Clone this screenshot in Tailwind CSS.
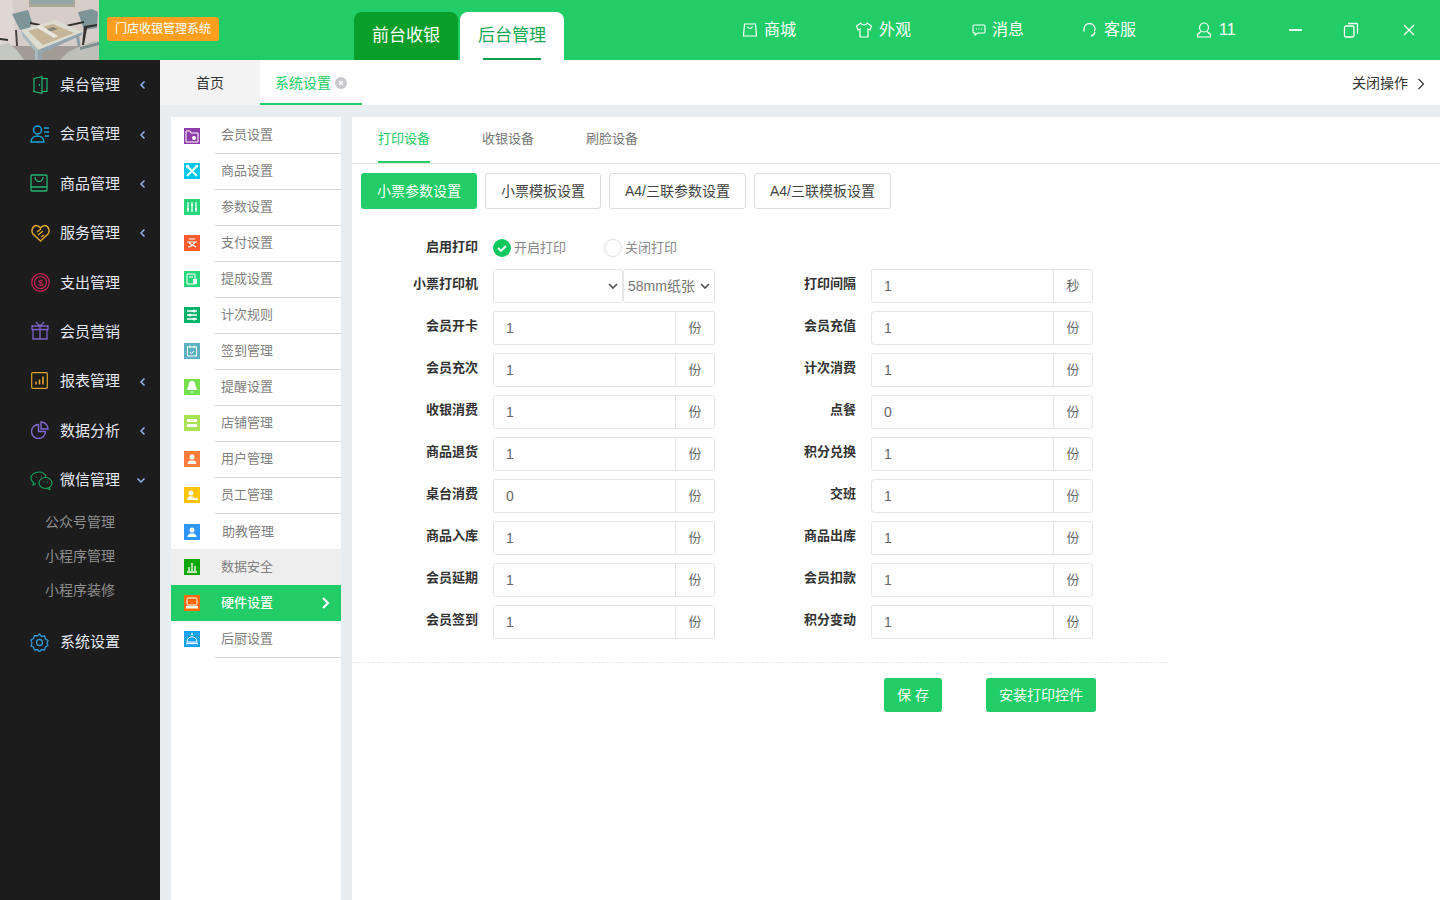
<!DOCTYPE html>
<html lang="zh-CN">
<head>
<meta charset="UTF-8">
<title>门店收银管理系统</title>
<script src="https://cdn.jsdelivr.net/npm/@tailwindcss/browser@4"></script>
</head>
<body class="h-[900px] w-[1440px] overflow-hidden bg-[#e9edf0] text-[14px] font-['Liberation_Sans','Noto_Sans_CJK_SC',sans-serif]">

<!-- top bar -->
<header class="flex h-[60px] items-stretch bg-[#22cc66] text-white">
  <svg class="h-[60px] w-[99px] shrink-0" viewBox="0 0 99 60">
    <defs><filter id="soft"><feGaussianBlur stdDeviation="0.6"/></filter></defs>
    <rect width="99" height="60" fill="#d6ccc8"/>
    <g filter="url(#soft)">
      <path d="M0 0h12l5 45H0z" fill="#e0d7d4"/>
      <rect x="29" y="0" width="46" height="7" fill="#a8a79a"/>
      <rect x="31" y="0" width="42" height="4" fill="#93a7ab"/>
      <path d="M0 46h99v14H0z" fill="#a39c96"/>
      <path d="M12 14l16-4 4 12-2 6-10 2-4-8z" fill="#7d9499"/>
      <path d="M78 12l14-3 6 3-1 16-13 2z" fill="#7d9499"/>
      <path d="M84 26l13-2v2l-10 2-3 17h-2z" fill="#33302e"/>
      <path d="M66 25l18-4v2l-18 4zM30 22l10 2v2l-10-2z" fill="#33302e"/>
      <path d="M15 30h2l1 16h-2z" fill="#4a4542"/>
      <path d="M38 50l44-18v3L42 53v7h-5v-8z" fill="#93a6af"/>
      <path d="M76 36h3l2 13h-3z" fill="#8a9ca5"/>
      <path d="M21 30 56 20l26 12-44 18z" fill="#dcdbd0"/>
      <path d="M28 31 53 24l21 9-31 12z" fill="#c6b596"/>
      <path d="M44 30l9-3 5 2-9 3z" fill="#8d8478"/>
      <path d="M36 27l18 11 4-2-18-11z" fill="#e8e6de"/>
      <path d="M21 30l17 20v10h-3V51L23 37z" fill="#a9bac0"/>
      <path d="M0 45l8-2 8 6 8 11H0z" fill="#c5c7c3"/>
      <path d="M0 38l8 1v2l-8-1z" fill="#33302e"/>
      <path d="M60 60l8-8 22-10 9-1v19z" fill="#bdbfb8"/>
      <path d="M80 47l19-5v3l-19 5z" fill="#7f8e8e"/>
    </g>
  </svg>
  <div class="ml-2 mt-[17px] flex h-6 w-[112px] shrink-0 items-center justify-center rounded-[3px] bg-[#ff9f1f] text-[12px]">门店收银管理系统</div>
  <div class="ml-[135px] mt-3 flex shrink-0 gap-0.5 text-[17px]">
    <div class="flex h-12 w-[104px] items-center justify-center rounded-t-lg bg-[#0a9e2a]">前台收银</div>
    <div class="relative flex h-12 w-[104px] items-center justify-center rounded-t-lg bg-white text-[#13a856]">后台管理<span class="absolute bottom-0 left-[23px] h-0.5 w-[58px] bg-[#12a150]"></span></div>
  </div>
  <nav class="ml-[178px] flex items-center text-[16px]">
    <div class="flex w-[113px] items-center gap-1.5">
      <svg class="h-4 w-4" viewBox="0 0 16 16" fill="none" stroke="currentColor" stroke-width="1.2"><path d="M2.500 2h11l1 12h-13z"/><path d="M5.500 4.500c.5 2.500 4.500 2.500 5 0"/></svg>商城
    </div>
    <div class="flex w-[117px] items-center gap-1.5">
      <svg class="h-[18px] w-[18px]" viewBox="0 0 18 18" fill="none" stroke="currentColor" stroke-width="1.2"><path d="M6 2 1.500 5l1.500 4 2-1v8h8V8l2 1 1.500-4L12 2c-.5 2.500-5.500 2.500-6 0z"/></svg>外观
    </div>
    <div class="flex w-[110px] items-center gap-1.5">
      <svg class="h-[14px] w-[14px]" viewBox="0 0 14 14" fill="none" stroke="currentColor" stroke-width="1.1"><path d="M2 2h10a1 1 0 0 1 1 1v6a1 1 0 0 1-1 1H6l-3 2v-2H2a1 1 0 0 1-1-1V3a1 1 0 0 1 1-1z"/><path d="M4 6h1M6.500 6h1M9 6h1"/></svg>消息
    </div>
    <div class="flex w-[114px] items-center gap-1.5">
      <svg class="h-4 w-4" viewBox="0 0 16 16" fill="none" stroke="currentColor" stroke-width="1.3"><path d="M2 9.500V7a5.500 5.500 0 0 1 11 0c0 1-.5 2-1 2"/><path d="M13 10c-.5 2-2 3.500-4 4"/></svg>客服
    </div>
    <div class="flex w-[71px] items-center gap-[7px]">
      <svg class="h-4 w-4" viewBox="0 0 16 16" fill="none" stroke="currentColor" stroke-width="1.2"><circle cx="8" cy="5.500" r="4.500"/><path d="M5 9.500 1.500 12.500V15h13v-2.500L11 9.500"/></svg>11
    </div>
    <div class="flex w-14 justify-center"><span class="h-0.5 w-[13px] bg-white/90"></span></div>
    <div class="flex w-14 justify-center">
      <svg class="h-4 w-4" viewBox="0 0 16 16" fill="none" stroke="currentColor" stroke-width="1.3"><rect x="1.500" y="4" width="9.500" height="11" rx="1.500"/><path d="M5 1.500h8.500a1 1 0 0 1 1 1V12"/></svg>
    </div>
    <div class="flex w-[60px] justify-center">
      <svg class="h-3 w-3" viewBox="0 0 12 12" stroke="currentColor" stroke-width="1.3"><path d="M1 1l10 10M11 1 1 11"/></svg>
    </div>
  </nav>
</header>

<div class="flex h-[840px]">
  <!-- dark sidebar -->
  <aside class="flex w-40 shrink-0 flex-col bg-[#1c1c1c] pt-[0.5px] text-[15px] text-[#e6e9f2]">
    <div class="relative flex h-[49.4px] items-center pl-[60px]">
      <svg class="absolute left-[33px] top-[15px] h-[18px] w-[15px]" viewBox="0 0 15 18" fill="none" stroke="#22b573" stroke-width="1.2"><path d="M1 2.500 9 .7v16.600l-8-1.800z"/><path d="M9 2.500h5v13H9"/><path d="M6.500 8v2"/></svg>
      桌台管理<span class="absolute right-3 text-[#8fb4ef]"><svg class="h-2.5 w-2.5" viewBox="0 0 10 10" fill="none" stroke="currentColor" stroke-width="1.5"><path d="M6.500 1.500 3 5l3.500 3.500"/></svg></span>
    </div>
    <div class="relative flex h-[49.4px] items-center pl-[60px]">
      <svg class="absolute left-[30px] top-[15px] h-[18px] w-5" viewBox="0 0 20 18" fill="none" stroke="#12a5dc" stroke-width="1.5"><circle cx="7.500" cy="5" r="4"/><path d="M1 17c0-4 3-6 6.500-6s6.500 2 6.500 6z"/><path d="M14 3h5M14 7h5M15 11h4"/></svg>
      会员管理<span class="absolute right-3 text-[#8fb4ef]"><svg class="h-2.5 w-2.5" viewBox="0 0 10 10" fill="none" stroke="currentColor" stroke-width="1.5"><path d="M6.500 1.500 3 5l3.500 3.500"/></svg></span>
    </div>
    <div class="relative flex h-[49.4px] items-center pl-[60px]">
      <svg class="absolute left-[30px] top-[15px] h-[18px] w-[18px]" viewBox="0 0 18 18" fill="none" stroke="#22b573" stroke-width="1.3"><rect x="1" y="1" width="16" height="16" rx="1"/><path d="M1 13h16M5 3c.5 6 7.500 6 8 0"/></svg>
      商品管理<span class="absolute right-3 text-[#8fb4ef]"><svg class="h-2.5 w-2.5" viewBox="0 0 10 10" fill="none" stroke="currentColor" stroke-width="1.5"><path d="M6.500 1.500 3 5l3.500 3.500"/></svg></span>
    </div>
    <div class="relative flex h-[49.4px] items-center pl-[60px]">
      <svg class="absolute left-[31px] top-[15px] h-[18px] w-[19px]" viewBox="0 0 19 18" fill="none" stroke="#e0a428" stroke-width="1.5"><path d="M9.500 17 2 10C0 7.500 1 2 5 1.500c2 0 3.500 1 4.500 2.500 1-1.500 2.500-2.500 4.500-2.500 4 .5 5 6 3 8.500z"/><path d="M6 8l4-3M7 11l5-4M10 13l3-2"/></svg>
      服务管理<span class="absolute right-3 text-[#8fb4ef]"><svg class="h-2.5 w-2.5" viewBox="0 0 10 10" fill="none" stroke="currentColor" stroke-width="1.5"><path d="M6.500 1.500 3 5l3.500 3.500"/></svg></span>
    </div>
    <div class="relative flex h-[49.4px] items-center pl-[60px]">
      <svg class="absolute left-[31px] top-[15px] h-[19px] w-[19px]" viewBox="0 0 19 19" fill="none" stroke="#c8245c" stroke-width="1.2"><circle cx="9.500" cy="9.500" r="8.800"/><circle cx="9.500" cy="9.500" r="6"/><text x="9.500" y="12.500" text-anchor="middle" font-size="9" font-weight="700" fill="#c8245c" stroke="none">$</text></svg>
      支出管理
    </div>
    <div class="relative flex h-[49.4px] items-center pl-[60px]">
      <svg class="absolute left-[31px] top-[14px] h-[19px] w-[18px]" viewBox="0 0 18 19" fill="none" stroke="#7e62c8" stroke-width="1.3"><path d="M1 5h16v3.500H1zM2 8.500h14V18H2zM9 5v13M5 1l4 4 4-4"/></svg>
      会员营销
    </div>
    <div class="relative flex h-[49.4px] items-center pl-[60px]">
      <svg class="absolute left-[31px] top-[15px] h-[17px] w-[17px]" viewBox="0 0 17 17" fill="none" stroke="#dfa52a" stroke-width="1.2"><rect x=".7" y=".7" width="15.600" height="15.600" rx="1"/><path d="M5 12.500v-3M8.500 12.500v-5M12 12.500v-8" stroke-width="1.600"/></svg>
      报表管理<span class="absolute right-3 text-[#8fb4ef]"><svg class="h-2.5 w-2.5" viewBox="0 0 10 10" fill="none" stroke="currentColor" stroke-width="1.5"><path d="M6.500 1.500 3 5l3.500 3.500"/></svg></span>
    </div>
    <div class="relative flex h-[49.4px] items-center pl-[60px]">
      <svg class="absolute left-[31px] top-[15px] h-[18px] w-[18px]" viewBox="0 0 18 18" fill="none" stroke="#8468d2" stroke-width="1.4"><path d="M7.500 3.500a7 7 0 1 0 7 7h-7z"/><path d="M10 1a7 7 0 0 1 7 7h-7z"/></svg>
      数据分析<span class="absolute right-3 text-[#8fb4ef]"><svg class="h-2.5 w-2.5" viewBox="0 0 10 10" fill="none" stroke="currentColor" stroke-width="1.5"><path d="M6.500 1.500 3 5l3.500 3.500"/></svg></span>
    </div>
    <div class="relative flex h-[49.4px] items-center pl-[60px]">
      <svg class="absolute left-[30px] top-[15px] h-[19px] w-[23px]" viewBox="0 0 23 19" fill="none" stroke="#12a05c" stroke-width="1.2"><path d="M9 1C4 1 1 4 1 7c0 2 1 3.500 2.500 4.500L3 14l3-1.500"/><path d="M9 1c3.500 0 6.500 2 7 5"/><ellipse cx="15.500" cy="12" rx="6.500" ry="5.500"/><path d="M19 16.500l1 2-3-1"/><path d="M6 6h1M11 6h1M13.500 11h1M17 11h1"/></svg>
      微信管理<span class="absolute right-[14px] text-[#8fb4ef]"><svg class="h-2.5 w-2.5" viewBox="0 0 10 10" fill="none" stroke="currentColor" stroke-width="1.5"><path d="M1.500 3.500 5 7l3.500-3.500"/></svg></span>
    </div>
    <div class="flex flex-col pl-[45px] pt-[0.5px] text-[14px] text-[#8e8e8e]">
      <div class="flex h-[34px] items-center">公众号管理</div>
      <div class="flex h-[34px] items-center">小程序管理</div>
      <div class="flex h-[34px] items-center">小程序装修</div>
    </div>
    <div class="relative mt-[10px] flex h-[49.4px] items-center pl-[60px]">
      <svg class="absolute left-[30px] top-[15px] h-[19px] w-[19px]" viewBox="0 0 19 19" fill="none" stroke="#2e98d6" stroke-width="1.3"><path d="M9.500 1l2 2.500 3-.5 1 3 2.500 1.500-1 3 1 2-2.500 1.500-1 3-3-.5-2 2.500-2-2.500-3 .5-1-3L1 13l1-3-1-3 2.500-1.500 1-3 3 .5z"/><circle cx="9.500" cy="9.500" r="3"/></svg>
      系统设置
    </div>
  </aside>

  <div class="flex min-w-0 flex-1 flex-col">
    <!-- open tabs -->
    <div class="flex h-[45px] shrink-0 bg-white">
      <div class="flex w-[100px] items-center justify-center bg-[#f3f3f4] pt-0.5 text-[#333]">首页</div>
      <div class="flex w-[102px] items-center justify-center gap-1 border-b-2 border-[#22cc66] pt-[3px] text-[#22cc66]">
        系统设置
        <svg class="h-3 w-3" viewBox="0 0 12 12"><circle cx="6" cy="6" r="6" fill="#c8c8cc"/><path d="M4 4l4 4M8 4 4 8" stroke="#fff" stroke-width="1.2"/></svg>
      </div>
      <div class="ml-auto flex items-center gap-2 pr-3 pt-0.5 text-[#333]">
        关闭操作
        <svg class="h-3 w-3" viewBox="0 0 12 12" fill="none" stroke="#333" stroke-width="1.2"><path d="M2.500 1 7.500 6l-5 5"/></svg>
      </div>
    </div>

    <div class="mt-3 flex min-h-0 flex-1">
      <!-- settings menu -->
      <div class="ml-[11px] w-[170px] shrink-0 bg-white text-[13px] text-[#7f7f7f]">
        <div class="flex h-[37px] items-center pl-[13px]">
          <svg class="h-4 w-4 shrink-0" viewBox="0 0 16 16"><rect width="16" height="16" fill="#8e3ca8"/><path d="M2 3h4l1 2h7v9H2z" fill="none" stroke="#fff"/><circle cx="10" cy="10" r="2" fill="#fff"/></svg>
          <div class="ml-[15px] flex h-full flex-1 items-center border-b border-[#d9d9d9] pl-1.5">会员设置</div>
        </div>
        <div class="flex h-9 items-center pl-[13px]">
          <svg class="-mt-0.5 h-4 w-4 shrink-0" viewBox="0 0 16 16"><rect width="16" height="16" fill="#00c8ea"/><path d="M3 3l10 10M13 3 3 13" stroke="#fff" stroke-width="1.8"/><circle cx="3.500" cy="3.500" r="1.800" fill="#fff"/><path d="M11 2h3v3z" fill="#fff"/></svg>
          <div class="ml-[15px] flex h-full flex-1 items-center border-b border-[#d9d9d9] pb-0.5 pl-1.5">商品设置</div>
        </div>
        <div class="flex h-9 items-center pl-[13px]">
          <svg class="-mt-0.5 h-4 w-4 shrink-0" viewBox="0 0 16 16"><rect width="16" height="16" fill="#25d67a"/><path d="M4 3v10M8 3v10M12 3v10" stroke="#fff" stroke-width="1.2"/><path d="M3 9h2v2H3zM7 5h2v2H7zM11 9h2v2h-2z" fill="#fff"/></svg>
          <div class="ml-[15px] flex h-full flex-1 items-center border-b border-[#d9d9d9] pb-0.5 pl-1.5">参数设置</div>
        </div>
        <div class="flex h-9 items-center pl-[13px]">
          <svg class="-mt-0.5 h-4 w-4 shrink-0" viewBox="0 0 16 16"><rect width="16" height="16" fill="#fb5c2d"/><path d="M5 4h6M3 7h10M4 12c3 0 6-3 7-5M5 8l7 4" stroke="#fff" fill="none" stroke-width="1.2"/></svg>
          <div class="ml-[15px] flex h-full flex-1 items-center border-b border-[#d9d9d9] pb-0.5 pl-1.5">支付设置</div>
        </div>
        <div class="flex h-9 items-center pl-[13px]">
          <svg class="-mt-0.5 h-4 w-4 shrink-0" viewBox="0 0 16 16"><rect width="16" height="16" fill="#25d67a"/><path d="M3 3h8v10H3zM5 6h4" fill="none" stroke="#fff"/><rect x="9" y="8" width="4" height="5" fill="#fff"/></svg>
          <div class="ml-[15px] flex h-full flex-1 items-center border-b border-[#d9d9d9] pb-0.5 pl-1.5">提成设置</div>
        </div>
        <div class="flex h-9 items-center pl-[13px]">
          <svg class="-mt-0.5 h-4 w-4 shrink-0" viewBox="0 0 16 16"><rect width="16" height="16" fill="#00b26a"/><path d="M3 4h10M3 8h10M3 12h10" stroke="#fff" stroke-width="1.3"/><circle cx="10" cy="4" r="1.500" fill="#fff"/><circle cx="6" cy="8" r="1.500" fill="#fff"/><circle cx="10" cy="12" r="1.500" fill="#fff"/></svg>
          <div class="ml-[15px] flex h-full flex-1 items-center border-b border-[#d9d9d9] pb-0.5 pl-1.5">计次规则</div>
        </div>
        <div class="flex h-9 items-center pl-[13px]">
          <svg class="-mt-0.5 h-4 w-4 shrink-0" viewBox="0 0 16 16"><rect width="16" height="16" fill="#5cb0c2"/><rect x="3.500" y="4" width="9" height="9" fill="none" stroke="#fff"/><path d="M6 9l1.500 1.500L10 8M6 2.500V5M10 2.500V5" stroke="#fff" fill="none"/></svg>
          <div class="ml-[15px] flex h-full flex-1 items-center border-b border-[#d9d9d9] pb-0.5 pl-1.5">签到管理</div>
        </div>
        <div class="flex h-9 items-center pl-[13px]">
          <svg class="-mt-0.5 h-4 w-4 shrink-0" viewBox="0 0 16 16"><rect width="16" height="16" fill="#74e04e"/><path d="M8 2c3 0 3.500 3 3.500 5L13 11H3l1.500-4C4.500 5 5 2 8 2zM6.500 12.500h3L8 14z" fill="#fff"/></svg>
          <div class="ml-[15px] flex h-full flex-1 items-center border-b border-[#d9d9d9] pb-0.5 pl-1.5">提醒设置</div>
        </div>
        <div class="flex h-9 items-center pl-[13px]">
          <svg class="-mt-0.5 h-4 w-4 shrink-0" viewBox="0 0 16 16"><rect width="16" height="16" fill="#a8e356"/><path d="M3 4h10v3H3zM3 9h10v3H3z" fill="#fff"/></svg>
          <div class="ml-[15px] flex h-full flex-1 items-center border-b border-[#d9d9d9] pb-0.5 pl-1.5">店铺管理</div>
        </div>
        <div class="flex h-9 items-center pl-[13px]">
          <svg class="-mt-0.5 h-4 w-4 shrink-0" viewBox="0 0 16 16"><rect width="16" height="16" fill="#ff7d3c"/><circle cx="8" cy="6" r="2.500" fill="#fff"/><path d="M3.500 13c0-5 9-5 9 0z" fill="#fff"/></svg>
          <div class="ml-[15px] flex h-full flex-1 items-center border-b border-[#d9d9d9] pb-0.5 pl-1.5">用户管理</div>
        </div>
        <div class="flex h-9 items-center pl-[13px]">
          <svg class="-mt-0.5 h-4 w-4 shrink-0" viewBox="0 0 16 16"><rect width="16" height="16" fill="#ffc400"/><circle cx="7" cy="6" r="2.500" fill="#fff"/><path d="M3 13c0-5 8-5 8 0z" fill="#fff"/><circle cx="12.500" cy="12" r="1.500" fill="#fff"/></svg>
          <div class="ml-[15px] flex h-full flex-1 items-center border-b border-[#d9d9d9] pb-0.5 pl-1.5">员工管理</div>
        </div>
        <div class="flex h-[35px] items-center pl-[13px]">
          <svg class="h-4 w-4 shrink-0" viewBox="0 0 16 16"><rect width="16" height="16" fill="#2f96f5"/><circle cx="8" cy="6" r="2.500" fill="#fff"/><path d="M3.500 13c0-5 9-5 9 0z" fill="#fff"/></svg>
          <div class="ml-[15px] flex h-full flex-1 items-center pl-[7px]">助教管理</div>
        </div>
        <div class="flex h-9 items-center bg-[#eeeeee] pl-[13px]">
          <svg class="h-4 w-4 shrink-0" viewBox="0 0 16 16"><rect width="16" height="16" fill="#0aa80a"/><path d="M5 12V8M8 12V4M11 12V7M3 13h10" stroke="#fff" stroke-width="1.3"/></svg>
          <div class="ml-[15px] flex h-full flex-1 items-center pl-1.5">数据安全</div>
        </div>
        <div class="flex h-9 items-center bg-[#22cc66] pl-[13px] text-white">
          <svg class="h-4 w-4 shrink-0" viewBox="0 0 16 16"><rect width="16" height="16" fill="#ff6a00"/><rect x="3" y="3" width="10" height="7" rx="1" fill="none" stroke="#fff"/><path d="M2 11h12v2.500H2z" fill="#fff"/></svg>
          <div class="ml-[15px] flex h-full flex-1 items-center pl-1.5 font-medium">硬件设置</div>
          <svg class="mr-2.5 h-3 w-2.5" viewBox="0 0 10 12" fill="none" stroke="#fff" stroke-width="2.2"><path d="M2 1l5 5-5 5"/></svg>
        </div>
        <div class="flex h-[37px] items-center pl-[13px]">
          <svg class="-mt-0.5 h-4 w-4 shrink-0" viewBox="0 0 16 16"><rect width="16" height="16" fill="#14a3f0"/><path d="M3 11c0-7 10-7 10 0z" fill="none" stroke="#fff"/><path d="M2 12.500h12" stroke="#fff" stroke-width="1.3"/><circle cx="8" cy="3" r="1" fill="#fff"/></svg>
          <div class="ml-[15px] flex h-full flex-1 items-center border-b border-[#d9d9d9] pl-1.5">后厨设置</div>
        </div>
      </div>

      <!-- main panel -->
      <main class="ml-[11px] flex-1 bg-white text-[13px]">
        <div class="flex h-[47px] gap-[52px] border-b border-[#e2e2e2] pl-[26px] text-[#777]">
          <div class="flex h-[46px] items-center border-b-2 border-[#22cc66] text-[#22cc66]">打印设备</div>
          <div class="flex h-[46px] items-center pb-0.5">收银设备</div>
          <div class="flex h-[46px] items-center pb-0.5">刷脸设备</div>
        </div>

        <div class="mt-[9px] flex gap-2 pl-[9px] text-[14px] text-[#444]">
          <div class="flex h-9 w-[116px] items-center justify-center rounded-[3px] bg-[#22cc66] text-white">小票参数设置</div>
          <div class="flex h-9 w-[116px] items-center justify-center rounded-[3px] border border-[#dddddd]">小票模板设置</div>
          <div class="flex h-9 w-[137px] items-center justify-center rounded-[3px] border border-[#dddddd]">A4/三联参数设置</div>
          <div class="flex h-9 w-[137px] items-center justify-center rounded-[3px] border border-[#dddddd]">A4/三联模板设置</div>
        </div>

        <div class="mt-7 flex h-[22px] items-center">
          <label class="w-[126px] pb-0.5 text-right font-bold text-[#333]">启用打印</label>
          <svg class="ml-[15px] h-[18px] w-[18px]" viewBox="0 0 18 18"><circle cx="9" cy="9" r="9" fill="#0fc75f"/><path d="M5 9l3 3 5-5" fill="none" stroke="#fff" stroke-width="1.8"/></svg>
          <span class="ml-[3px] text-[#888]">开启打印</span>
          <span class="ml-[38px] h-[18px] w-[18px] rounded-full border border-[#dddddd]"></span>
          <span class="ml-[3px] text-[#888]">关闭打印</span>
        </div>

        <div class="mt-2.5 grid w-[816px] grid-cols-[378px_378px] gap-y-2 text-[#666]">
          <div class="flex items-start">
            <label class="w-[126px] pt-[5px] text-right font-bold text-[#333]">小票打印机</label>
            <div class="ml-[15px] flex w-[222px]">
              <div class="flex h-[34px] w-[130px] items-center justify-end rounded-[3px] border border-[#e5e6e7] pr-[3px]"><svg class="h-3 w-3" viewBox="0 0 12 12" fill="none" stroke="#555" stroke-width="1.7"><path d="M2 4l4 4 4-4"/></svg></div>
              <div class="flex h-[34px] w-[92px] items-center justify-between rounded-[3px] border border-[#e5e6e7] pl-1 pr-[3px] text-[14px] text-[#777]">58mm纸张<svg class="h-3 w-3" viewBox="0 0 12 12" fill="none" stroke="#555" stroke-width="1.7"><path d="M2 4l4 4 4-4"/></svg></div>
            </div>
          </div>
          <div class="flex items-start">
            <label class="w-[126px] pt-[5px] text-right font-bold text-[#333]">打印间隔</label>
            <div class="ml-[15px] flex h-[34px] w-[222px] rounded-[3px] border border-[#e5e6e7]"><span class="flex-1 self-center pl-3 text-[14px]">1</span><span class="flex w-[39px] items-center justify-center border-l border-[#e5e6e7]">秒</span></div>
          </div>
          <div class="flex items-start">
            <label class="w-[126px] pt-[5px] text-right font-bold text-[#333]">会员开卡</label>
            <div class="ml-[15px] flex h-[34px] w-[222px] rounded-[3px] border border-[#e5e6e7]"><span class="flex-1 self-center pl-3 text-[14px]">1</span><span class="flex w-[39px] items-center justify-center border-l border-[#e5e6e7]">份</span></div>
          </div>
          <div class="flex items-start">
            <label class="w-[126px] pt-[5px] text-right font-bold text-[#333]">会员充值</label>
            <div class="ml-[15px] flex h-[34px] w-[222px] rounded-[3px] border border-[#e5e6e7]"><span class="flex-1 self-center pl-3 text-[14px]">1</span><span class="flex w-[39px] items-center justify-center border-l border-[#e5e6e7]">份</span></div>
          </div>
          <div class="flex items-start">
            <label class="w-[126px] pt-[5px] text-right font-bold text-[#333]">会员充次</label>
            <div class="ml-[15px] flex h-[34px] w-[222px] rounded-[3px] border border-[#e5e6e7]"><span class="flex-1 self-center pl-3 text-[14px]">1</span><span class="flex w-[39px] items-center justify-center border-l border-[#e5e6e7]">份</span></div>
          </div>
          <div class="flex items-start">
            <label class="w-[126px] pt-[5px] text-right font-bold text-[#333]">计次消费</label>
            <div class="ml-[15px] flex h-[34px] w-[222px] rounded-[3px] border border-[#e5e6e7]"><span class="flex-1 self-center pl-3 text-[14px]">1</span><span class="flex w-[39px] items-center justify-center border-l border-[#e5e6e7]">份</span></div>
          </div>
          <div class="flex items-start">
            <label class="w-[126px] pt-[5px] text-right font-bold text-[#333]">收银消费</label>
            <div class="ml-[15px] flex h-[34px] w-[222px] rounded-[3px] border border-[#e5e6e7]"><span class="flex-1 self-center pl-3 text-[14px]">1</span><span class="flex w-[39px] items-center justify-center border-l border-[#e5e6e7]">份</span></div>
          </div>
          <div class="flex items-start">
            <label class="w-[126px] pt-[5px] text-right font-bold text-[#333]">点餐</label>
            <div class="ml-[15px] flex h-[34px] w-[222px] rounded-[3px] border border-[#e5e6e7]"><span class="flex-1 self-center pl-3 text-[14px]">0</span><span class="flex w-[39px] items-center justify-center border-l border-[#e5e6e7]">份</span></div>
          </div>
          <div class="flex items-start">
            <label class="w-[126px] pt-[5px] text-right font-bold text-[#333]">商品退货</label>
            <div class="ml-[15px] flex h-[34px] w-[222px] rounded-[3px] border border-[#e5e6e7]"><span class="flex-1 self-center pl-3 text-[14px]">1</span><span class="flex w-[39px] items-center justify-center border-l border-[#e5e6e7]">份</span></div>
          </div>
          <div class="flex items-start">
            <label class="w-[126px] pt-[5px] text-right font-bold text-[#333]">积分兑换</label>
            <div class="ml-[15px] flex h-[34px] w-[222px] rounded-[3px] border border-[#e5e6e7]"><span class="flex-1 self-center pl-3 text-[14px]">1</span><span class="flex w-[39px] items-center justify-center border-l border-[#e5e6e7]">份</span></div>
          </div>
          <div class="flex items-start">
            <label class="w-[126px] pt-[5px] text-right font-bold text-[#333]">桌台消费</label>
            <div class="ml-[15px] flex h-[34px] w-[222px] rounded-[3px] border border-[#e5e6e7]"><span class="flex-1 self-center pl-3 text-[14px]">0</span><span class="flex w-[39px] items-center justify-center border-l border-[#e5e6e7]">份</span></div>
          </div>
          <div class="flex items-start">
            <label class="w-[126px] pt-[5px] text-right font-bold text-[#333]">交班</label>
            <div class="ml-[15px] flex h-[34px] w-[222px] rounded-[3px] border border-[#e5e6e7]"><span class="flex-1 self-center pl-3 text-[14px]">1</span><span class="flex w-[39px] items-center justify-center border-l border-[#e5e6e7]">份</span></div>
          </div>
          <div class="flex items-start">
            <label class="w-[126px] pt-[5px] text-right font-bold text-[#333]">商品入库</label>
            <div class="ml-[15px] flex h-[34px] w-[222px] rounded-[3px] border border-[#e5e6e7]"><span class="flex-1 self-center pl-3 text-[14px]">1</span><span class="flex w-[39px] items-center justify-center border-l border-[#e5e6e7]">份</span></div>
          </div>
          <div class="flex items-start">
            <label class="w-[126px] pt-[5px] text-right font-bold text-[#333]">商品出库</label>
            <div class="ml-[15px] flex h-[34px] w-[222px] rounded-[3px] border border-[#e5e6e7]"><span class="flex-1 self-center pl-3 text-[14px]">1</span><span class="flex w-[39px] items-center justify-center border-l border-[#e5e6e7]">份</span></div>
          </div>
          <div class="flex items-start">
            <label class="w-[126px] pt-[5px] text-right font-bold text-[#333]">会员延期</label>
            <div class="ml-[15px] flex h-[34px] w-[222px] rounded-[3px] border border-[#e5e6e7]"><span class="flex-1 self-center pl-3 text-[14px]">1</span><span class="flex w-[39px] items-center justify-center border-l border-[#e5e6e7]">份</span></div>
          </div>
          <div class="flex items-start">
            <label class="w-[126px] pt-[5px] text-right font-bold text-[#333]">会员扣款</label>
            <div class="ml-[15px] flex h-[34px] w-[222px] rounded-[3px] border border-[#e5e6e7]"><span class="flex-1 self-center pl-3 text-[14px]">1</span><span class="flex w-[39px] items-center justify-center border-l border-[#e5e6e7]">份</span></div>
          </div>
          <div class="flex items-start">
            <label class="w-[126px] pt-[5px] text-right font-bold text-[#333]">会员签到</label>
            <div class="ml-[15px] flex h-[34px] w-[222px] rounded-[3px] border border-[#e5e6e7]"><span class="flex-1 self-center pl-3 text-[14px]">1</span><span class="flex w-[39px] items-center justify-center border-l border-[#e5e6e7]">份</span></div>
          </div>
          <div class="flex items-start">
            <label class="w-[126px] pt-[5px] text-right font-bold text-[#333]">积分变动</label>
            <div class="ml-[15px] flex h-[34px] w-[222px] rounded-[3px] border border-[#e5e6e7]"><span class="flex-1 self-center pl-3 text-[14px]">1</span><span class="flex w-[39px] items-center justify-center border-l border-[#e5e6e7]">份</span></div>
          </div>
        </div>

        <div class="mt-[23px] w-[816px] border-t border-dashed border-[#e7eaec]"></div>

        <div class="mt-[15px] flex pl-[532px] text-[14px] text-white">
          <button class="h-[34px] w-[58px] rounded-[3px] bg-[#22cc66]">保 存</button>
          <button class="ml-11 h-[34px] w-[110px] rounded-[3px] bg-[#22cc66]">安装打印控件</button>
        </div>
      </main>
    </div>
  </div>
</div>
</body>
</html>
